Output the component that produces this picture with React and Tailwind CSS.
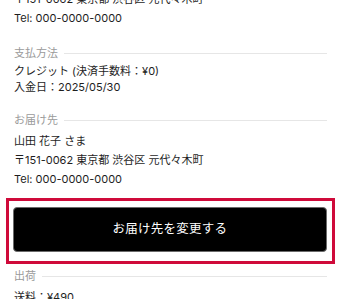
const SectionLabel = ({ children, className = '' }) => (
  <div className={`flex items-center gap-[6px] h-[16px] ${className}`}>
    <span className="text-[11px] leading-[16px] text-[#9a9a9a]">{children}</span>
    <div className="flex-1 h-px bg-[#e6e6e6]" />
  </div>
)

export default function App() {
  return (
    <div
      className="w-full min-h-[299px] bg-white text-[#1e1e1e] overflow-hidden"
      style={{ fontFamily: 'Inter, "Noto Sans CJK JP", sans-serif' }}
    >
      <div className="px-[14px] -mt-[10px] text-[11px] leading-[19px]">
        <p>〒151-0062 東京都 渋谷区 元代々木町</p>
        <p>Tel: 000-0000-0000</p>
      </div>

      <div className="px-[14px] mt-[17px]">
        <SectionLabel>支払方法</SectionLabel>
        <div className="mt-[2px] text-[11px] leading-[16px]">
          <p>クレジット (決済手数料：¥0)</p>
          <p>入金日：2025/05/30</p>
        </div>
      </div>

      <div className="px-[14px] mt-[17px]">
        <SectionLabel>お届け先</SectionLabel>
        <div className="mt-[4px] text-[11px] leading-[19px]">
          <p>山田 花子 さま</p>
          <p>〒151-0062 東京都 渋谷区 元代々木町</p>
          <p>Tel: 000-0000-0000</p>
        </div>
      </div>

      <div className="mx-[6px] mt-[9px] border-[3px] border-[#cf0a3a] pt-[6px] pb-[9px] pl-[4px] pr-[5px]">
        <button className="w-full h-[45px] rounded-[4px] bg-black border border-[#6b6b6b] text-white text-[12.5px] tracking-[0.02em]">
          お届け先を変更する
        </button>
      </div>

      <div className="px-[14px] mt-[4px]">
        <SectionLabel>出荷</SectionLabel>
        <div className="mt-[4px] text-[11px] leading-[19px]">
          <p>送料：¥490</p>
        </div>
      </div>
    </div>
  )
}
